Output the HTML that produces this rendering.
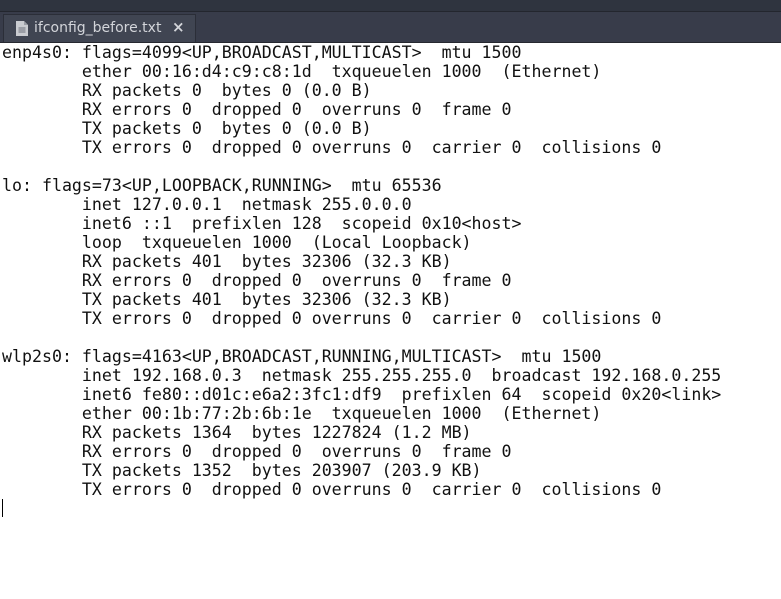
<!DOCTYPE html>
<html><head><meta charset="utf-8"><style>
body{margin:0;width:781px;height:599px;background:#fff;overflow:hidden;position:relative}
.top{position:absolute;left:0;top:0;width:781px;height:11px;background:#2f343f;border-bottom:1px solid #23262e}
.bar{position:absolute;left:0;top:12px;width:781px;height:30px;background:#383c4a;border-bottom:1px solid #262830}
.tab{position:absolute;left:3px;top:14px;width:193px;height:28px;background:#404552;border:1px solid #2b2e38;border-bottom:none;box-sizing:border-box;font-family:"DejaVu Sans","Liberation Sans",sans-serif;font-size:14px;color:#d3d5da}
.tab span{position:absolute;left:30px;top:5px}
.tab b{position:absolute;left:168px;top:3px;font-size:15px;font-weight:bold;color:#d3d5da}
pre{position:absolute;left:2px;top:43px;margin:0;font-family:"DejaVu Sans Mono","Liberation Mono",monospace;font-size:16.6px;line-height:19px;color:#111}
.cur{position:absolute;left:2px;top:499px;width:1px;height:18px;background:#000}
</style></head><body>
<div class="top"></div><div class="bar"></div>
<div class="tab">
<svg style="position:absolute;left:12px;top:6px" width="12" height="15" viewBox="0 0 12 15"><path d="M0 0H8L12 4V15H0Z" fill="#c9cbd0"/><path d="M8 0V4H12" fill="#9a9da5"/><path d="M2.5 7H9.5M2.5 9H9.5M2.5 11H9.5" stroke="#6b6f7a" stroke-width="1"/></svg>
<span>ifconfig_before.txt</span><b>×</b></div>
<pre>enp4s0: flags=4099&lt;UP,BROADCAST,MULTICAST&gt;  mtu 1500
        ether 00:16:d4:c9:c8:1d  txqueuelen 1000  (Ethernet)
        RX packets 0  bytes 0 (0.0 B)
        RX errors 0  dropped 0  overruns 0  frame 0
        TX packets 0  bytes 0 (0.0 B)
        TX errors 0  dropped 0 overruns 0  carrier 0  collisions 0

lo: flags=73&lt;UP,LOOPBACK,RUNNING&gt;  mtu 65536
        inet 127.0.0.1  netmask 255.0.0.0
        inet6 ::1  prefixlen 128  scopeid 0x10&lt;host&gt;
        loop  txqueuelen 1000  (Local Loopback)
        RX packets 401  bytes 32306 (32.3 KB)
        RX errors 0  dropped 0  overruns 0  frame 0
        TX packets 401  bytes 32306 (32.3 KB)
        TX errors 0  dropped 0 overruns 0  carrier 0  collisions 0

wlp2s0: flags=4163&lt;UP,BROADCAST,RUNNING,MULTICAST&gt;  mtu 1500
        inet 192.168.0.3  netmask 255.255.255.0  broadcast 192.168.0.255
        inet6 fe80::d01c:e6a2:3fc1:df9  prefixlen 64  scopeid 0x20&lt;link&gt;
        ether 00:1b:77:2b:6b:1e  txqueuelen 1000  (Ethernet)
        RX packets 1364  bytes 1227824 (1.2 MB)
        RX errors 0  dropped 0  overruns 0  frame 0
        TX packets 1352  bytes 203907 (203.9 KB)
        TX errors 0  dropped 0 overruns 0  carrier 0  collisions 0</pre>
<div class="cur"></div>
</body></html>
